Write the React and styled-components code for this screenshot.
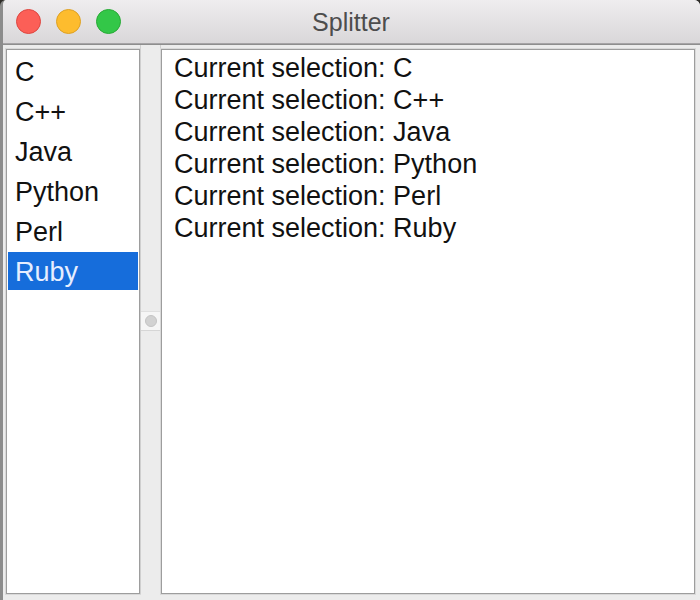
import styled, { createGlobalStyle } from 'styled-components'

const GlobalStyle = createGlobalStyle`
    html, body {
        margin: 0;
        padding: 0;
        background: #2e2c28;
    }
    * {
        box-sizing: border-box;
    }
`

const languages = ['C', 'C++', 'Java', 'Python', 'Perl', 'Ruby']

function App() {
    const selected = 'Ruby'

    return (
        <>
            <GlobalStyle />
            <Window>
                <TitleBar>
                    <Lights>
                        <Light color='#fc5f57' edge='#de4640' />
                        <Light color='#fdbc2e' edge='#dea123' />
                        <Light color='#33c748' edge='#27aa35' />
                    </Lights>
                    <Title>Splitter</Title>
                </TitleBar>

                <Body>
                    <ListPanel>
                        {languages.map(lang => (
                            <ListItem key={lang} $active={lang === selected}>{lang}</ListItem>
                        ))}
                    </ListPanel>

                    <Splitter>
                        <Handle>
                            <Knob />
                        </Handle>
                    </Splitter>

                    <LogPanel>
                        {languages.map(lang => (
                            <LogLine key={lang}>Current selection: {lang}</LogLine>
                        ))}
                    </LogPanel>
                </Body>
            </Window>
        </>
    )
}

export default App

const Window = styled.div`
    width: 700px;
    height: 600px;
    display: flex;
    flex-direction: column;
    background: #ececec;
    border-radius: 6px 6px 0 0;
    border-left: 3px solid #8c8c8c;
    overflow: hidden;
    font-family: "Liberation Sans", Arial, sans-serif;
`

const TitleBar = styled.div`
    position: relative;
    height: 44px;
    flex-shrink: 0;
    display: flex;
    align-items: center;
    justify-content: center;
    background: linear-gradient(#efedef, #d9d7d9);
    border-bottom: 1px solid #a6a4a6;
    box-shadow: 0 1px 0 #8e8e8e;
`

const Lights = styled.div`
    position: absolute;
    left: 13px;
    top: 9px;
    display: flex;
    gap: 15px;
`

const Light = styled.span`
    width: 25px;
    height: 25px;
    border-radius: 50%;
    background: ${p => p.color};
    border: 1px solid ${p => p.edge};
`

const Title = styled.div`
    font-size: 25px;
    color: #4d4d4d;
    margin-left: -1px;
    margin-top: 1px;
`

const Body = styled.div`
    flex: 1;
    display: flex;
    padding: 4px 3px 6px 2px;
`

const panel = `
    background: #fff;
    border: 1px solid #9d9d9d;
    box-shadow: 0 0 0 1px #d9d9d9;
`

const ListPanel = styled.div`
    ${panel}
    width: 134px;
    flex-shrink: 0;
    margin: 1px 0 0 1px;
    padding: 2px 1px;
    display: flex;
    flex-direction: column;
    gap: 2px;
`

const ListItem = styled.div`
    height: 38px;
    line-height: 36px;
    padding: 2px 0 0 7px;
    font-size: 27px;
    color: ${p => p.$active ? '#e6eeff' : '#111'};
    background: ${p => p.$active ? '#166ddb' : 'transparent'};
`

const Splitter = styled.div`
    width: 21px;
    flex-shrink: 0;
    margin-top: -4px;
    display: flex;
    align-items: center;
    justify-content: center;
    border-left: 1px solid #cfcfcf;
    border-right: 1px solid #cfcfcf;
`

const Handle = styled.div`
    width: 19px;
    height: 20px;
    display: flex;
    align-items: center;
    justify-content: center;
    background: #f6f6f6;
    border-top: 1px solid #e0e0e0;
    border-bottom: 1px solid #d6d6d6;
    margin-top: 3px;
`

const Knob = styled.span`
    width: 12px;
    height: 12px;
    border-radius: 50%;
    background: #d2d2d2;
    border: 1px solid #c4c4c4;
`

const LogPanel = styled.div`
    ${panel}
    flex: 1;
    margin: 1px 2px 0 0;
    padding: 2px 12px;
`

const LogLine = styled.div`
    height: 32px;
    line-height: 32px;
    font-size: 27px;
    color: #111;
`
